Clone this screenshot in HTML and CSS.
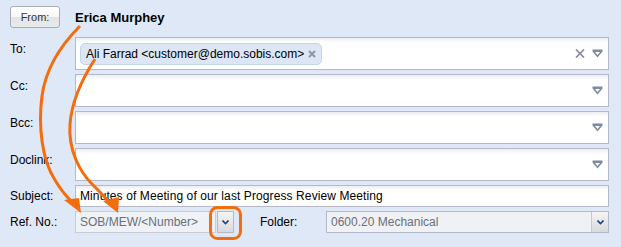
FILE: index.html
```html
<!DOCTYPE html>
<html lang="en">
<head>
    <meta charset="UTF-8">
    <title>Compose Letter</title>
    <link rel="stylesheet" href="styles.css">
</head>
<body>
    <div class="form">
        <div class="from-row">
            <button class="from-btn">From:</button>
            <span class="sender">Erica Murphey</span>
        </div>

        <div class="row">
            <label class="lbl">To:</label>
            <div class="field tall">
                <span class="chip">Ali Farrad &lt;customer@demo.sobis.com&gt;<svg class="chip-x" width="8" height="8" viewBox="0 0 8 8"><path d="M1 1 L7 7 M7 1 L1 7" stroke="#8c96a6" stroke-width="2" fill="none"/></svg></span>
                <span class="tools">
                    <svg class="ico" width="10" height="9" viewBox="0 0 10 9"><path d="M1 0.5 L9 8.5 M9 0.5 L1 8.5" stroke="#7f8a9e" stroke-width="1.6" fill="none"/></svg>
                    <svg class="ico" width="11" height="9" viewBox="0 0 11 9"><path d="M0.5 0.5 H10.5 V2.5 L5.5 8.5 L0.5 2.5 Z M3 3 L5.5 6 L8 3 Z" fill="#7f8a9e" fill-rule="evenodd"/></svg>
                </span>
            </div>
        </div>

        <div class="row">
            <label class="lbl">Cc:</label>
            <div class="field tall">
                <span class="tools">
                    <svg class="ico" width="11" height="9" viewBox="0 0 11 9"><path d="M0.5 0.5 H10.5 V2.5 L5.5 8.5 L0.5 2.5 Z M3 3 L5.5 6 L8 3 Z" fill="#7f8a9e" fill-rule="evenodd"/></svg>
                </span>
            </div>
        </div>

        <div class="row">
            <label class="lbl">Bcc:</label>
            <div class="field tall">
                <span class="tools">
                    <svg class="ico" width="11" height="9" viewBox="0 0 11 9"><path d="M0.5 0.5 H10.5 V2.5 L5.5 8.5 L0.5 2.5 Z M3 3 L5.5 6 L8 3 Z" fill="#7f8a9e" fill-rule="evenodd"/></svg>
                </span>
            </div>
        </div>

        <div class="row">
            <label class="lbl">Doclink:</label>
            <div class="field tall">
                <span class="tools">
                    <svg class="ico" width="11" height="9" viewBox="0 0 11 9"><path d="M0.5 0.5 H10.5 V2.5 L5.5 8.5 L0.5 2.5 Z M3 3 L5.5 6 L8 3 Z" fill="#7f8a9e" fill-rule="evenodd"/></svg>
                </span>
            </div>
        </div>

        <div class="row short">
            <label class="lbl">Subject:</label>
            <div class="field line">Minutes of Meeting of our last Progress Review Meeting</div>
        </div>

        <div class="row short">
            <label class="lbl">Ref. No.:</label>
            <div class="combo ref">
                <span class="combo-text">SOB/MEW/&lt;Number&gt;</span>
                <span class="trigger"><svg width="7" height="5" viewBox="0 0 7 5"><path d="M0.5 0.5 L3.5 3.5 L6.5 0.5" stroke="#23457a" stroke-width="1.6" fill="none"/></svg></span>
            </div>
            <label class="lbl folder-lbl">Folder:</label>
            <div class="combo folder">
                <span class="combo-text">0600.20 Mechanical</span>
                <span class="trigger"><svg width="7" height="5" viewBox="0 0 7 5"><path d="M0.5 0.5 L3.5 3.5 L6.5 0.5" stroke="#23457a" stroke-width="1.6" fill="none"/></svg></span>
            </div>
        </div>
    </div>

    <!-- annotation arrows drawn over the form -->
    <svg class="annot" width="621" height="247" viewBox="0 0 621 247">
        <path d="M80 26 C62 44 46 66 42 96 C38 126 42 160 55 180 C62 192 68 198 72 202" stroke="#f56c0c" stroke-width="3" fill="none"/>
        <path d="M64 200 L81 213 L79 198 Z" fill="#f56c0c"/>
        <path d="M95 59 C84 76 72 98 70 124 C68 150 80 172 92 184 C100 192 106 198 110 203" stroke="#f56c0c" stroke-width="3" fill="none"/>
        <path d="M103 201 L118 213 L119 197 Z" fill="#f56c0c"/>
        <rect x="210.5" y="207.5" width="30" height="31" rx="7" stroke="#f56c0c" stroke-width="3" fill="none"/>
    </svg>
</body>
</html>
```
FILE: styles.css
```css
body {
    margin: 0;
    background: #dfe8f6;
    font-family: "Liberation Sans", Arial, sans-serif;
    font-size: 12px;
    color: #000;
    position: relative;
    width: 621px;
    height: 247px;
    overflow: hidden;
}

.form {
    padding: 6px 12px 0 10px;
    display: flex;
    flex-direction: column;
    gap: 4px;
}

.from-row {
    display: flex;
    align-items: center;
    height: 22px;
    margin-bottom: 5px;
}

.from-btn {
    width: 50px;
    height: 22px;
    padding: 0;
    border: 1px solid #a7adb8;
    border-radius: 3px;
    background: linear-gradient(#ffffff 0%, #f7f7f7 50%, #e3e4e6 51%, #e9eaec 100%);
    font-family: "Liberation Sans", Arial, sans-serif;
    font-size: 11px;
    color: #333;
}

.sender {
    margin-left: 15px;
    font-size: 13px;
    font-weight: bold;
}

.row {
    display: flex;
    align-items: flex-start;
}

.row.short {
    align-items: center;
}

.lbl {
    width: 65px;
    flex: none;
    line-height: 16px;
    padding-top: 4px;
}

.row.short .lbl {
    padding-top: 0;
}

.field {
    flex: 1;
    box-sizing: border-box;
    border: 1px solid #b5b8c8;
    background: linear-gradient(#eceef2, #ffffff 5px);
    display: flex;
    align-items: center;
}

.field.tall {
    height: 33px;
    padding: 0 4px;
}

.field.line {
    height: 22px;
    padding: 0 4px;
    letter-spacing: 0.1px;
}

.chip {
    display: inline-flex;
    align-items: center;
    height: 22px;
    box-sizing: border-box;
    padding: 0 5px 0 5px;
    background: #dde6f5;
    border: 1px solid #c5d3ea;
    border-radius: 5px;
    white-space: nowrap;
}

.chip-x {
    margin-left: 4px;
    display: block;
}

.tools {
    margin-left: auto;
    display: flex;
    align-items: center;
    gap: 7px;
    padding-right: 1px;
}

.ico {
    display: block;
}

.combo {
    box-sizing: border-box;
    height: 22px;
    border: 1px solid #b5b8c8;
    background: #eff1f4;
    display: flex;
    align-items: center;
    color: #6b6f78;
}

.combo-text {
    flex: 1;
    padding-left: 4px;
    white-space: nowrap;
}

.combo.ref {
    width: 160px;
    background: transparent;
    border-color: transparent;
}

.combo.ref .combo-text {
    align-self: stretch;
    display: flex;
    align-items: center;
    border: 1px solid #c9ccd6;
    margin: -1px 0 -1px -1px;
    background: #eef1f5;
}

.combo.ref .trigger {
    margin-left: 1px;
    border: 1px solid #b5b8c8;
    height: 22px;
    margin-top: -1px;
    margin-bottom: -1px;
}

.trigger {
    width: 17px;
    height: 20px;
    box-sizing: border-box;
    background: linear-gradient(#f4f4f4, #d9dadd);
    border-left: 1px solid #c6c9d2;
    display: flex;
    align-items: center;
    justify-content: center;
}

.folder-lbl {
    margin-left: 25px;
    width: 66px;
}

.combo.folder {
    flex: 1;
}

.annot {
    position: absolute;
    top: 0;
    left: 0;
    pointer-events: none;
}
```
